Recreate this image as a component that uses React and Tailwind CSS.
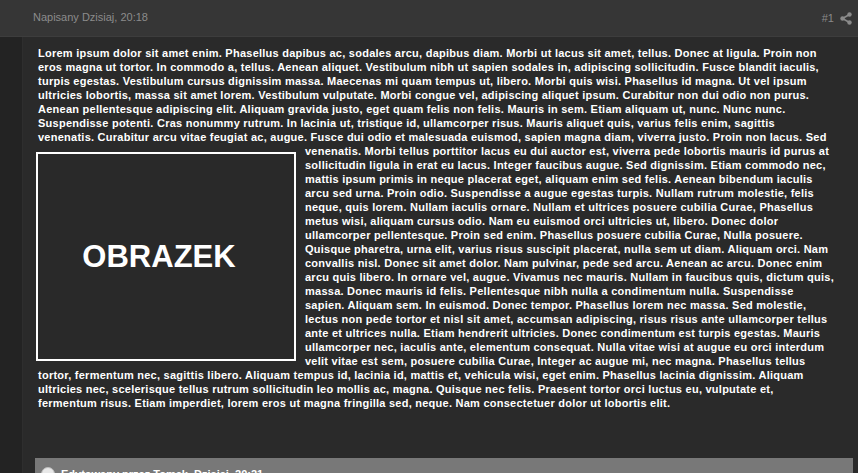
import React from "react";

const above = [
  "Lorem ipsum dolor sit amet enim. Phasellus dapibus ac, sodales arcu, dapibus diam. Morbi ut lacus sit amet, tellus. Donec at ligula. Proin non",
  "eros magna ut tortor. In commodo a, tellus. Aenean aliquet. Vestibulum nibh ut sapien sodales in, adipiscing sollicitudin. Fusce blandit iaculis,",
  "turpis egestas. Vestibulum cursus dignissim massa. Maecenas mi quam tempus ut, libero. Morbi quis wisi. Phasellus id magna. Ut vel ipsum",
  "ultricies lobortis, massa sit amet lorem. Vestibulum vulputate. Morbi congue vel, adipiscing aliquet ipsum. Curabitur non dui odio non purus.",
  "Aenean pellentesque adipiscing elit. Aliquam gravida justo, eget quam felis non felis. Mauris in sem. Etiam aliquam ut, nunc. Nunc nunc.",
  "Suspendisse potenti. Cras nonummy rutrum. In lacinia ut, tristique id, ullamcorper risus. Mauris aliquet quis, varius felis enim, sagittis",
  "venenatis. Curabitur arcu vitae feugiat ac, augue. Fusce dui odio et malesuada euismod, sapien magna diam, viverra justo. Proin non lacus. Sed",
];
const beside = [
  "venenatis. Morbi tellus porttitor lacus eu dui auctor est, viverra pede lobortis mauris id purus at",
  "sollicitudin ligula in erat eu lacus. Integer faucibus augue. Sed dignissim. Etiam commodo nec,",
  "mattis ipsum primis in neque placerat eget, aliquam enim sed felis. Aenean bibendum iaculis",
  "arcu sed urna. Proin odio. Suspendisse a augue egestas turpis. Nullam rutrum molestie, felis",
  "neque, quis lorem. Nullam iaculis ornare. Nullam et ultrices posuere cubilia Curae, Phasellus",
  "metus wisi, aliquam cursus odio. Nam eu euismod orci ultricies ut, libero. Donec dolor",
  "ullamcorper pellentesque. Proin sed enim. Phasellus posuere cubilia Curae, Nulla posuere.",
  "Quisque pharetra, urna elit, varius risus suscipit placerat, nulla sem ut diam. Aliquam orci. Nam",
  "convallis nisl. Donec sit amet dolor. Nam pulvinar, pede sed arcu. Aenean ac arcu. Donec enim",
  "arcu quis libero. In ornare vel, augue. Vivamus nec mauris. Nullam in faucibus quis, dictum quis,",
  "massa. Donec mauris id felis. Pellentesque nibh nulla a condimentum nulla. Suspendisse",
  "sapien. Aliquam sem. In euismod. Donec tempor. Phasellus lorem nec massa. Sed molestie,",
  "lectus non pede tortor et nisl sit amet, accumsan adipiscing, risus risus ante ullamcorper tellus",
  "ante et ultrices nulla. Etiam hendrerit ultricies. Donec condimentum est turpis egestas. Mauris",
  "ullamcorper nec, iaculis ante, elementum consequat. Nulla vitae wisi at augue eu orci interdum",
  "velit vitae est sem, posuere cubilia Curae, Integer ac augue mi, nec magna. Phasellus tellus",
  "tortor, fermentum nec, sagittis libero. Aliquam tempus id, lacinia id, mattis et, vehicula wisi, eget enim. Phasellus lacinia dignissim. Aliquam",
  "ultricies nec, scelerisque tellus rutrum sollicitudin leo mollis ac, magna. Quisque nec felis. Praesent tortor orci luctus eu, vulputate et,",
  "fermentum risus. Etiam imperdiet, lorem eros ut magna fringilla sed, neque. Nam consectetuer dolor ut lobortis elit.",
];

function Lines({ items }) {
  return items.map((l, i) => (
    <React.Fragment key={i}>
      {l}
      <br />
    </React.Fragment>
  ));
}

export default function App() {
  return (
    <div className="w-[858px] h-[473px] overflow-hidden bg-[#2a2a2a] flex flex-col">
      <div className="h-[37px] shrink-0 bg-[#363636] border-b border-[#3d3d3d] flex items-center justify-between pl-[33px] pr-[6px] font-['Liberation_Sans',sans-serif] text-[11px] text-[#8c8c8c]">
        <span className="pb-[1px]">Napisany Dzisiaj, 20:18</span>
        <div className="flex items-center gap-[6px]">
          <span className="text-[#8a8a8a]">#1</span>
          <svg width="12" height="13" viewBox="0 0 12 13">
            <line x1="9.5" y1="2.5" x2="2.5" y2="6.5" stroke="#8a8a8a" strokeWidth="1.6" />
            <line x1="2.5" y1="6.5" x2="9.5" y2="10.5" stroke="#8a8a8a" strokeWidth="1.6" />
            <circle cx="9.5" cy="2.5" r="2.2" fill="#8a8a8a" />
            <circle cx="2.5" cy="6.5" r="2.2" fill="#8a8a8a" />
            <circle cx="9.5" cy="10.5" r="2.2" fill="#8a8a8a" />
          </svg>
        </div>
      </div>
      <div className="flex flex-1 min-h-0">
        <div className="w-[23px] shrink-0 bg-[#232323] border-r border-[#2e2e2e]" />
        <div className="flex-1 min-w-0 flex flex-col">
          <div className="pl-[15px] pt-[9px] font-['Liberation_Sans',sans-serif] font-bold text-[11px] leading-[14px] text-white whitespace-nowrap tracking-[0.25px]">
            <Lines items={above} />
            <div className="float-left -ml-[2px] mt-[8px] mr-[9px] w-[260px] h-[209px] border-2 border-white bg-[#292929] flex items-center justify-center pr-[14px]">
              <span className="font-['Liberation_Sans',sans-serif] font-bold text-[31px] tracking-normal leading-none">OBRAZEK</span>
            </div>
            <Lines items={beside} />
          </div>
          <div className="mt-auto ml-[12px] mr-[5px] h-[15px] bg-[#787878] flex items-end gap-[6px] pl-[6px] overflow-hidden">
            <div className="w-[14px] h-[14px] rounded-full bg-[#e8e8e8] border border-[#bdbdbd] translate-y-[8px] shrink-0" />
            <span className="font-['Liberation_Sans',sans-serif] font-bold text-[11px] text-white translate-y-[9px]">Edytowany przez Tomek, Dzisiaj, 20:21</span>
          </div>
        </div>
      </div>
    </div>
  );
}
